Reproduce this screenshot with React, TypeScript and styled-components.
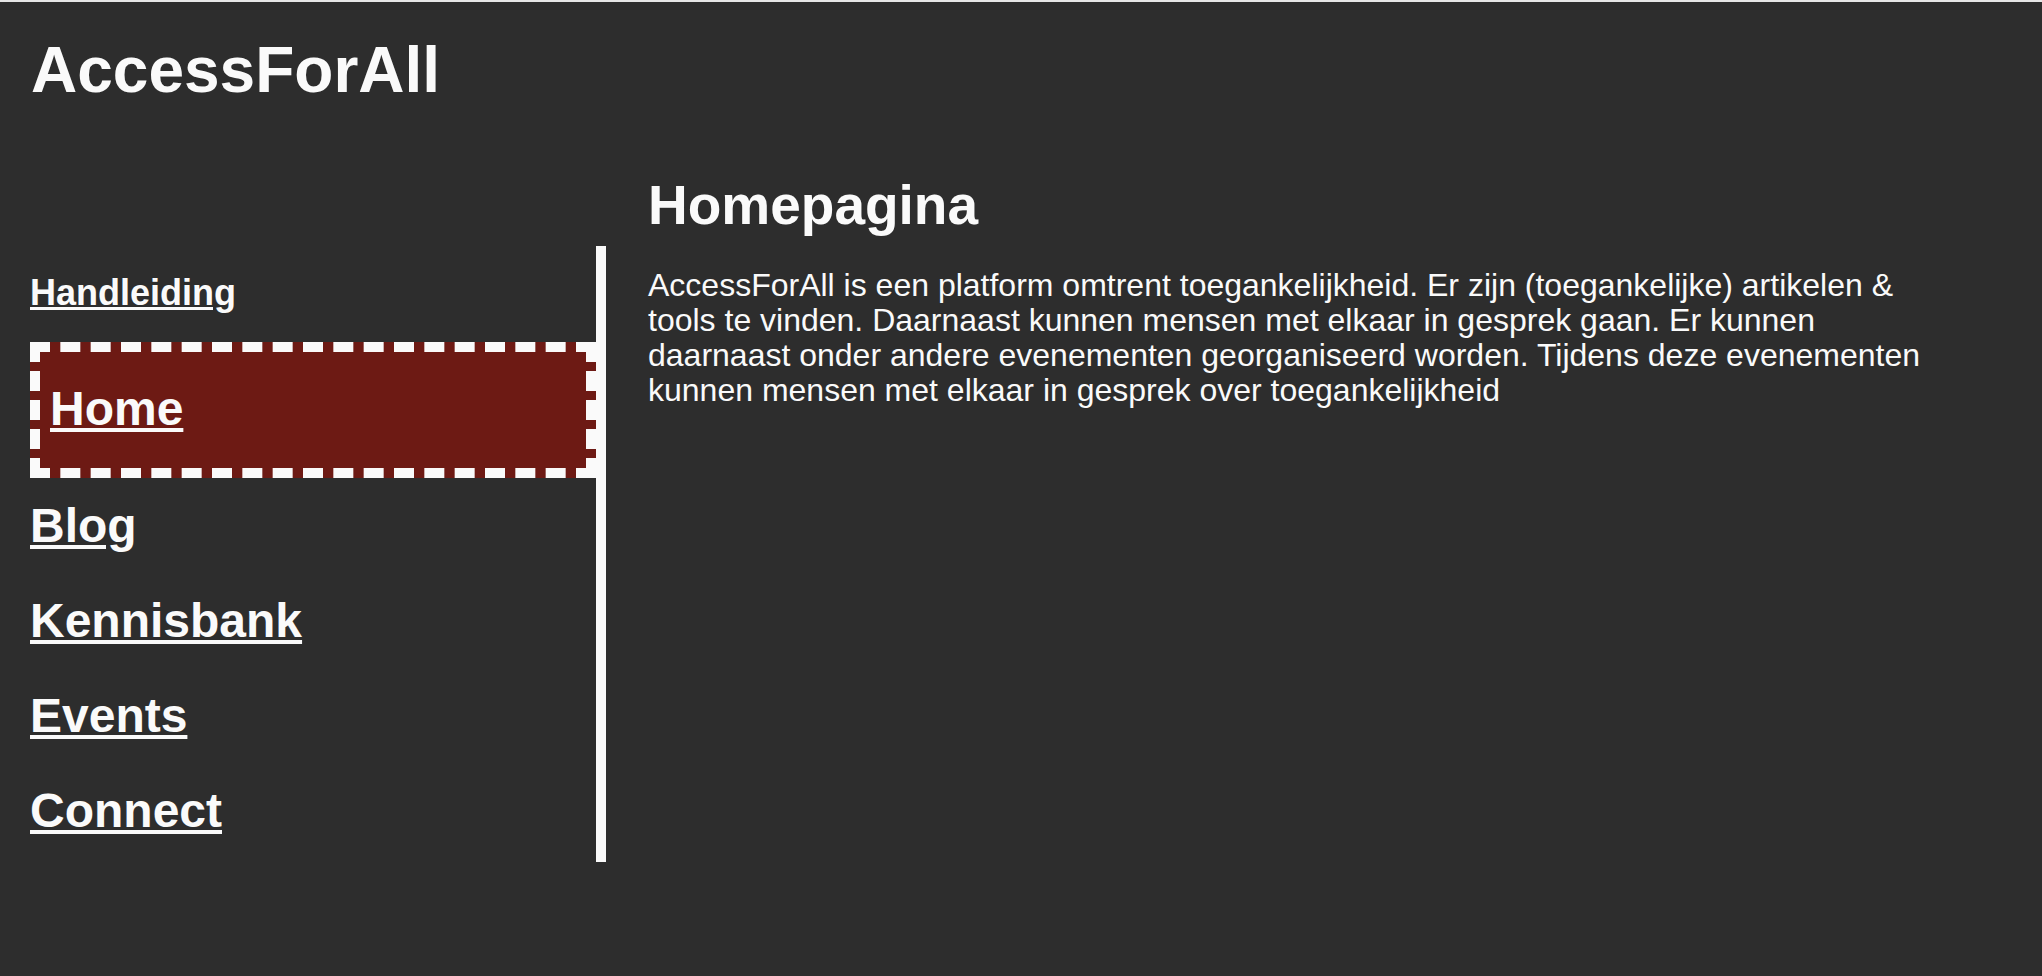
import React from "react";
import styled, { createGlobalStyle } from "styled-components";

const Global = createGlobalStyle`
  html, body {
    margin: 0;
    padding: 0;
    background: #2d2d2d;
  }
  body {
    font-family: "Liberation Sans", Arial, Helvetica, sans-serif;
    color: #fafafa;
  }
`;

const Page = styled.div`
  box-sizing: border-box;
  min-height: 976px;
  border-top: 2px solid #e6e6e6;
  background: #2d2d2d;
  padding: 0 30px;
`;

const Header = styled.header`
  padding-top: 31px;
`;

const Logo = styled.h1`
  margin: 0;
  font-size: 64px;
  font-weight: 700;
  line-height: normal;
  padding-left: 1px;
`;

const Main = styled.div`
  display: flex;
  align-items: flex-start;
  gap: 42px;
  padding-top: 66px;
`;

const Nav = styled.nav`
  box-sizing: border-box;
  flex: 0 0 576px;
  margin-top: 73px;
  padding: 26px 0 4px;
  border-right: 10px solid #fafafa;
`;

const NavLink = styled.a<{ $size: number }>`
  display: inline-block;
  color: #fafafa;
  font-weight: 700;
  font-size: ${(p) => p.$size}px;
  line-height: ${(p) => Math.round(p.$size * 1.15)}px;
  text-decoration: underline;
`;

const ManualRow = styled.div`
  margin-bottom: 29px;
`;

const NavList = styled.ul`
  list-style: none;
  margin: 0;
  padding: 0;
  display: flex;
  flex-direction: column;
`;

const NavItem = styled.li<{ $active?: boolean }>`
  ${(p) =>
    p.$active
      ? `
    border: 10px dashed #fafafa;
    background: #6d1a14;
    padding: 29px 10px 32px;
  `
      : `
    padding: 20px 0;
  `}
`;

const Content = styled.section`
  flex: 1;
  min-width: 0;
`;

const Title = styled.h2`
  margin: 0;
  font-size: 55px;
  font-weight: 700;
  line-height: normal;
`;

const Text = styled.p`
  margin: 31px 0 0;
  max-width: 1295px;
  font-size: 32px;
  line-height: 35px;
`;

const items = [
  { label: "Home", active: true },
  { label: "Blog" },
  { label: "Kennisbank" },
  { label: "Events" },
  { label: "Connect" },
];

export default function App() {
  return (
    <>
      <Global />
      <Page>
        <Header>
          <Logo>AccessForAll</Logo>
        </Header>
        <Main>
          <Nav>
            <ManualRow>
              <NavLink href="#" $size={36}>
                Handleiding
              </NavLink>
            </ManualRow>
            <NavList>
              {items.map((it) => (
                <NavItem key={it.label} $active={it.active}>
                  <NavLink href="#" $size={48}>
                    {it.label}
                  </NavLink>
                </NavItem>
              ))}
            </NavList>
          </Nav>
          <Content>
            <Title>Homepagina</Title>
            <Text>
              AccessForAll is een platform omtrent toegankelijkheid. Er zijn
              (toegankelijke) artikelen &amp; tools te vinden. Daarnaast kunnen
              mensen met elkaar in gesprek gaan. Er kunnen daarnaast onder andere
              evenementen georganiseerd worden. Tijdens deze evenementen kunnen
              mensen met elkaar in gesprek over toegankelijkheid
            </Text>
          </Content>
        </Main>
      </Page>
    </>
  );
}
